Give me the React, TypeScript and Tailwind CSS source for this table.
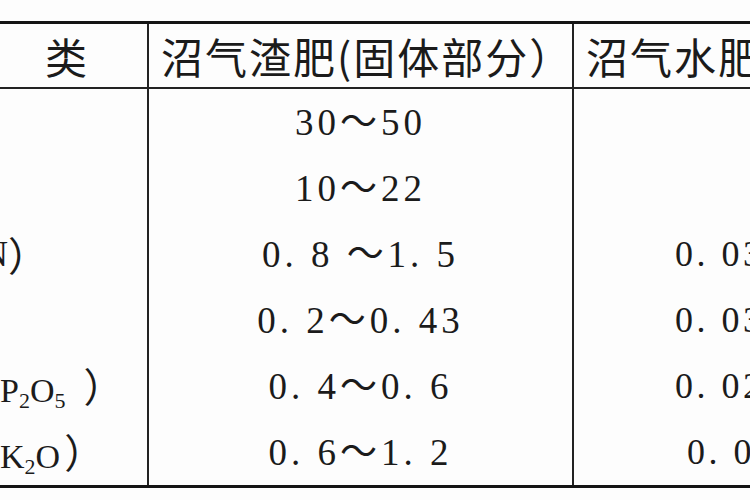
import React from "react";

const mid = ["30～50", "10～22", "0. 8 ～1. 5", "0. 2～0. 43", "0. 4～0. 6", "0. 6～1. 2"];
const right: (string | null)[] = [null, null, "0. 03", "0. 03", "0. 02", "0. 0"];
const rightCls = [
  "flex items-center pl-[101px] text-[36px] leading-none tracking-[3.5px] whitespace-pre font-['Liberation_Serif','Noto_Sans_CJK_SC',serif]",
  "flex items-center pl-[101px] text-[36px] leading-none tracking-[3.5px] whitespace-pre font-['Liberation_Serif','Noto_Sans_CJK_SC',serif]",
  "flex items-center pl-[101px] text-[36px] leading-none tracking-[3.5px] whitespace-pre font-['Liberation_Serif','Noto_Sans_CJK_SC',serif]",
  "flex items-center pl-[101px] text-[36px] leading-none tracking-[3.5px] whitespace-pre font-['Liberation_Serif','Noto_Sans_CJK_SC',serif]",
  "flex items-center pl-[101px] text-[36px] leading-none tracking-[3.5px] whitespace-pre font-['Liberation_Serif','Noto_Sans_CJK_SC',serif]",
  "flex items-center pl-[113px] text-[36px] leading-none tracking-[3.5px] whitespace-pre font-['Liberation_Serif','Noto_Sans_CJK_SC',serif]",
];

function LeftCell({ i }: { i: number }) {
  if (i === 2)
    return (
      <div className="flex items-center whitespace-nowrap -ml-[18px] text-[36px] leading-none font-['Liberation_Serif','Noto_Sans_CJK_SC',serif]">
        <span>N</span>
        <span className="text-[40px] font-['Noto_Sans_CJK_SC',sans-serif]">）</span>
      </div>
    );
  if (i === 4)
    return (
      <div className="flex items-baseline whitespace-nowrap text-[34px] leading-none font-['Liberation_Serif','Noto_Sans_CJK_SC',serif]">
        <span>P</span>
        <span className="text-[22px] relative top-[6px]">2</span>
        <span>O</span>
        <span className="text-[22px] relative top-[6px]">5</span>
        <span className="text-[40px] ml-[18px] font-['Noto_Sans_CJK_SC',sans-serif]">）</span>
      </div>
    );
  if (i === 5)
    return (
      <div className="flex items-baseline whitespace-nowrap text-[34px] leading-none font-['Liberation_Serif','Noto_Sans_CJK_SC',serif]">
        <span>K</span>
        <span className="text-[22px] relative top-[6px]">2</span>
        <span>O</span>
        <span className="text-[40px] ml-[4px] font-['Noto_Sans_CJK_SC',sans-serif]">）</span>
      </div>
    );
  return null;
}

export default function App() {
  return (
    <div className="w-[750px] h-[500px] overflow-hidden bg-[#fdfdfd] text-[#1b1b1b] pt-[21px]">
      <div className="w-[900px] border-t-[3px] border-b-[3px] border-[#141414]">
        <div className="grid grid-cols-[149px_425px_1fr] h-[65px] border-b-2 border-[#222]">
          <div className="border-r-2 border-[#222] flex items-center pl-[45px] text-[42px] leading-none font-['Noto_Sans_CJK_SC',sans-serif]">
            类
          </div>
          <div className="border-r-2 border-[#222] flex items-center pl-[12px] text-[42px] leading-none tracking-[2px] whitespace-nowrap font-['Noto_Sans_CJK_SC',sans-serif]">
            沼气渣肥(固体部分）
          </div>
          <div className="flex items-center pl-[12px] text-[42px] leading-none tracking-[2px] whitespace-nowrap font-['Noto_Sans_CJK_SC',sans-serif]">
            沼气水肥
          </div>
        </div>
        {mid.map((m, i) => (
          <div key={i} className="grid grid-cols-[149px_425px_1fr] h-[66px]">
            <div className="border-r-2 border-[#222] flex items-center overflow-hidden">
              <LeftCell i={i} />
            </div>
            <div className="border-r-2 border-[#222] flex items-center justify-center text-[37px] leading-none tracking-[4px] whitespace-pre font-['Liberation_Serif','Noto_Sans_CJK_SC',serif]">
              {m}
            </div>
            <div className={rightCls[i]}>{right[i]}</div>
          </div>
        ))}
      </div>
    </div>
  );
}
